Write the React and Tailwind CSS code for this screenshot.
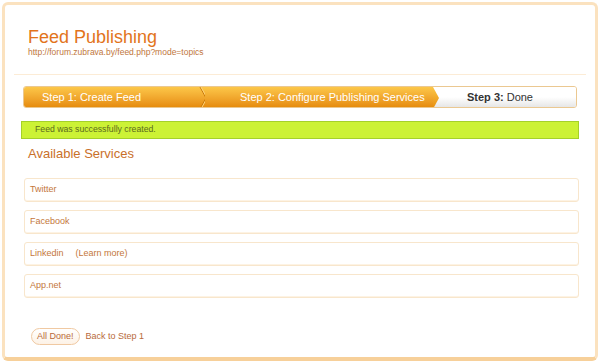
export default function App() {
  const services = ['Twitter', 'Facebook', 'Linkedin', 'App.net']

  return (
    <div className="w-[600px] h-[363px] bg-white p-[2px] font-['Liberation_Sans',Arial,sans-serif]">
      <div className="h-full rounded-[6px] border-[3px] border-[#fbe2bf] border-b-[4px] border-b-[#f7d09a] bg-white flex flex-col">
        {/* Header */}
        <div className="px-[23px] pt-[22px] pb-[16px]">
          <h1 className="text-[18px] leading-[20px] text-[#e2741c]">Feed Publishing</h1>
          <p className="text-[8.5px] leading-[11px] text-[#c0763c]">http://forum.zubrava.by/feed.php?mode=topics</p>
        </div>
        <div className="mx-[9px] h-px bg-[#fcecd6]" />

        {/* Steps */}
        <div className="mx-[18px] mt-[11px] h-[22px] flex rounded-[3px] border border-[#ebc891] overflow-hidden text-[11px]">
          <div className="relative w-[181px] flex items-center pl-[18px] text-white bg-gradient-to-b from-[#fcc748] to-[#e68c0c]">
            Step 1: Create Feed
            <svg className="absolute right-[-4px] top-0" width="10" height="22" viewBox="0 0 10 22">
              <polyline points="1,0 7,11 1,22" fill="none" stroke="#c77708" strokeWidth="1" />
              <polyline points="2,0 8,11 2,22" fill="none" stroke="#fcd27a" strokeWidth="1" />
            </svg>
          </div>
          <div className="relative w-[228px] flex items-center pl-[35px] text-white bg-gradient-to-b from-[#fcc748] to-[#e68c0c]">
            Step 2: Configure Publishing Services
          </div>
          <div className="relative flex-1 flex items-center pl-[34px] text-[#333] bg-gradient-to-b from-white via-white to-[#e6e6e6]">
            <svg className="absolute left-0 top-0" width="7" height="22" viewBox="0 0 7 22">
              <defs>
                <linearGradient id="og" x1="0" y1="0" x2="0" y2="1">
                  <stop offset="0" stopColor="#fcc748" />
                  <stop offset="1" stopColor="#e68c0c" />
                </linearGradient>
              </defs>
              <polygon points="0,0 6,11 0,22" fill="url(#og)" />
            </svg>
            <span className="font-bold mr-[3px]">Step 3:</span> Done
          </div>
        </div>

        {/* Success */}
        <div className="mx-[16px] mt-[13px] h-[18px] flex items-center pl-[13px] bg-[#ccf235] border border-[#a5d12a] text-[8.7px] text-[#5b6b1e]">
          Feed was successfully created.
        </div>

        <h2 className="ml-[23px] mt-[6px] text-[13px] leading-[18px] text-[#c9702a]">Available Services</h2>

        {/* Services */}
        <div className="ml-[19px] mr-[16px] mt-[15px] flex flex-col gap-[8px]">
          {services.map((s) => (
            <div key={s} className="h-[24px] flex items-center pl-[5px] rounded-[3px] border border-[#f8e6cc] text-[9px] text-[#c4773c] shadow-[inset_0_-1px_0_#fdf3e4]">
              {s}
              {s === 'Linkedin' && <span className="ml-[12px]">(Learn more)</span>}
            </div>
          ))}
        </div>

        {/* Actions */}
        <div className="ml-[26px] mt-[30px] flex items-center gap-[6px] text-[9px] text-[#b86a3a]">
          <button className="h-[17px] px-[5px] rounded-full border border-[#f0c9a2] bg-gradient-to-b from-white to-[#fdf2e6] text-[#b86a3a]">All Done!</button>
          <span>Back to Step 1</span>
        </div>
      </div>
    </div>
  )
}
